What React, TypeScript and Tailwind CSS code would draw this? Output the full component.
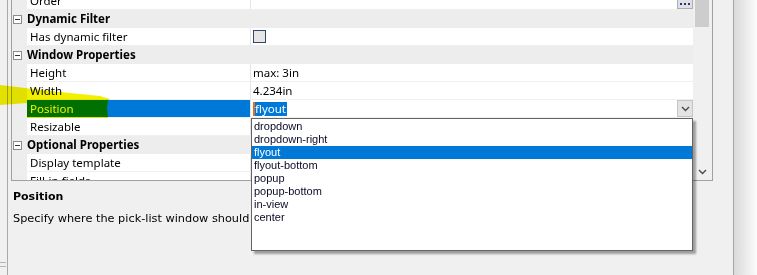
import React from 'react';

const gridFont = { fontFamily: '"Noto Sans", "Liberation Sans", sans-serif' };
const descFont = { fontFamily: '"DejaVu Sans", Verdana, sans-serif' };
const listFont = { fontFamily: '"Liberation Sans", Arial, sans-serif' };

function Chevron({ className }: { className?: string }) {
    return (
        <svg width="9" height="6" viewBox="0 0 9 6" className={className}>
            <polyline points="1,1 4.5,4.5 8,1" fill="none" stroke="#4a4a4a" strokeWidth="1.4" />
        </svg>
    );
}

function Category({ label }: { label: string }) {
    return (
        <div className="flex h-[18px] items-center bg-[#ededed]">
            <div className="ml-[1px] flex h-[9px] w-[9px] items-center justify-center border border-[#8c8c8c] bg-white">
                <div className="h-px w-[5px] bg-[#333]" />
            </div>
            <span className="ml-[5px] text-[11.5px] font-bold text-black">{label}</span>
        </div>
    );
}

function Row({ name, children, selected }: { name: string; children?: React.ReactNode; selected?: boolean }) {
    return (
        <div className="flex h-[18px] border-b border-[#efefef] bg-[#ededed]">
            <div className="w-[15px]" />
            <div
                className={
                    selected
                        ? 'flex w-[223px] items-center bg-[#0078d7] pl-[3px] text-[11.5px] text-white'
                        : 'flex w-[223px] items-center bg-white pl-[3px] text-[11.5px] text-black'
                }
            >
                {name}
            </div>
            <div className="w-px bg-[#e4e4e4]" />
            <div className="relative flex flex-1 items-center bg-white pl-[2px] text-[11.5px] text-black">{children}</div>
        </div>
    );
}

const options = ['dropdown', 'dropdown-right', 'flyout', 'flyout-bottom', 'popup', 'popup-bottom', 'in-view', 'center'];

export default function App() {
    return (
        <div className="relative flex h-[275px] w-[757px] overflow-hidden bg-[#f0f0f0]" style={gridFont}>
            {/* left strip */}
            <div className="relative w-[7px]">
                <div className="absolute bottom-[8px] left-0 h-[5px] w-[6px] border-t border-b border-[#b4b4b4]" />
            </div>
            <div className="w-px bg-[#a9a9a9]" />

            {/* main area */}
            <div className="flex w-[725px] flex-col">
                <div className="ml-[3px] flex h-[181px] w-[702px] border-r border-b border-l border-[#a0a0a0]">
                    <div className="w-[681px] overflow-hidden">
                        <div className="-mt-[8px]">
                            <Row name="Order">
                                <div className="absolute top-0 right-0 flex h-[17px] w-[16px] items-end justify-center gap-[2px] border border-[#adadad] bg-[#e1e1e1] pb-[3px]">
                                    <span className="h-[2px] w-[2px] bg-[#2030a0]" />
                                    <span className="h-[2px] w-[2px] bg-[#2030a0]" />
                                    <span className="h-[2px] w-[2px] bg-[#2030a0]" />
                                </div>
                            </Row>
                            <Category label="Dynamic Filter" />
                            <Row name="Has dynamic filter">
                                <div className="h-[13px] w-[13px] border border-[#33466e] bg-[#e6e6e6]" />
                            </Row>
                            <Category label="Window Properties" />
                            <Row name="Height">max: 3in</Row>
                            <Row name="Width">4.234in</Row>
                            <Row name="Position" selected>
                                <span className="border-l-2 border-[#e07020] bg-[#0078d7] pr-[1px] leading-[14px] text-white">flyout</span>
                                <div className="absolute top-0 right-0 flex h-[17px] w-[16px] items-center justify-center border border-[#c4c4c4] bg-[#e3e3e3]">
                                    <Chevron />
                                </div>
                            </Row>
                            <Row name="Resizable" />
                            <Category label="Optional Properties" />
                            <Row name="Display template" />
                            <Row name="Fill-in fields" />
                        </div>
                    </div>
                    {/* scrollbar */}
                    <div className="flex w-[19px] flex-col bg-[#f0f0f0]">
                        <div className="ml-[2px] h-[27px] w-[14px] bg-[#cdcdcd]" />
                        <div className="flex-1" />
                        <div className="flex h-[17px] items-center justify-center">
                            <Chevron />
                        </div>
                    </div>
                </div>

                {/* description */}
                <div className="pt-[9px] pl-[5px] text-black" style={descFont}>
                    <div className="text-[11px] leading-[13px] font-bold">Position</div>
                    <div className="mt-[9px] w-[238px] overflow-hidden text-[11.3px] leading-[13px] whitespace-nowrap">
                        Specify where the pick-list window should
                    </div>
                </div>
            </div>

            <div className="w-px bg-[#a7a7a7]" />
            <div className="flex-1 bg-gradient-to-r from-[#dadada] to-[#fbfbfb]" />

            {/* open drop-down list */}
            <div
                className="absolute top-[118px] left-[251px] h-[133px] w-[442px] border border-[#646464] bg-white pt-px shadow-[3px_3px_2px_rgba(0,0,0,0.35)]"
                style={listFont}
            >
                {options.map((o) => (
                    <div
                        key={o}
                        className={
                            o === 'flyout'
                                ? 'h-[13px] bg-[#0078d7] pl-[2px] text-[11px] leading-[13px] text-white'
                                : 'h-[13px] pl-[2px] text-[11px] leading-[13px] text-[#0a0a28]'
                        }
                    >
                        {o}
                    </div>
                ))}
            </div>

            {/* highlighter annotation */}
            <svg className="pointer-events-none absolute top-0 left-0 mix-blend-multiply" width="757" height="275">
                <polygon points="0,85 25,88 60,92 100,96 110,99 107,101 60,101 27,103 0,105" fill="#f2f000" />
                <polygon points="27,100 108,100 107,108 108,118 27,118" fill="#f2f000" />
            </svg>
        </div>
    );
}
